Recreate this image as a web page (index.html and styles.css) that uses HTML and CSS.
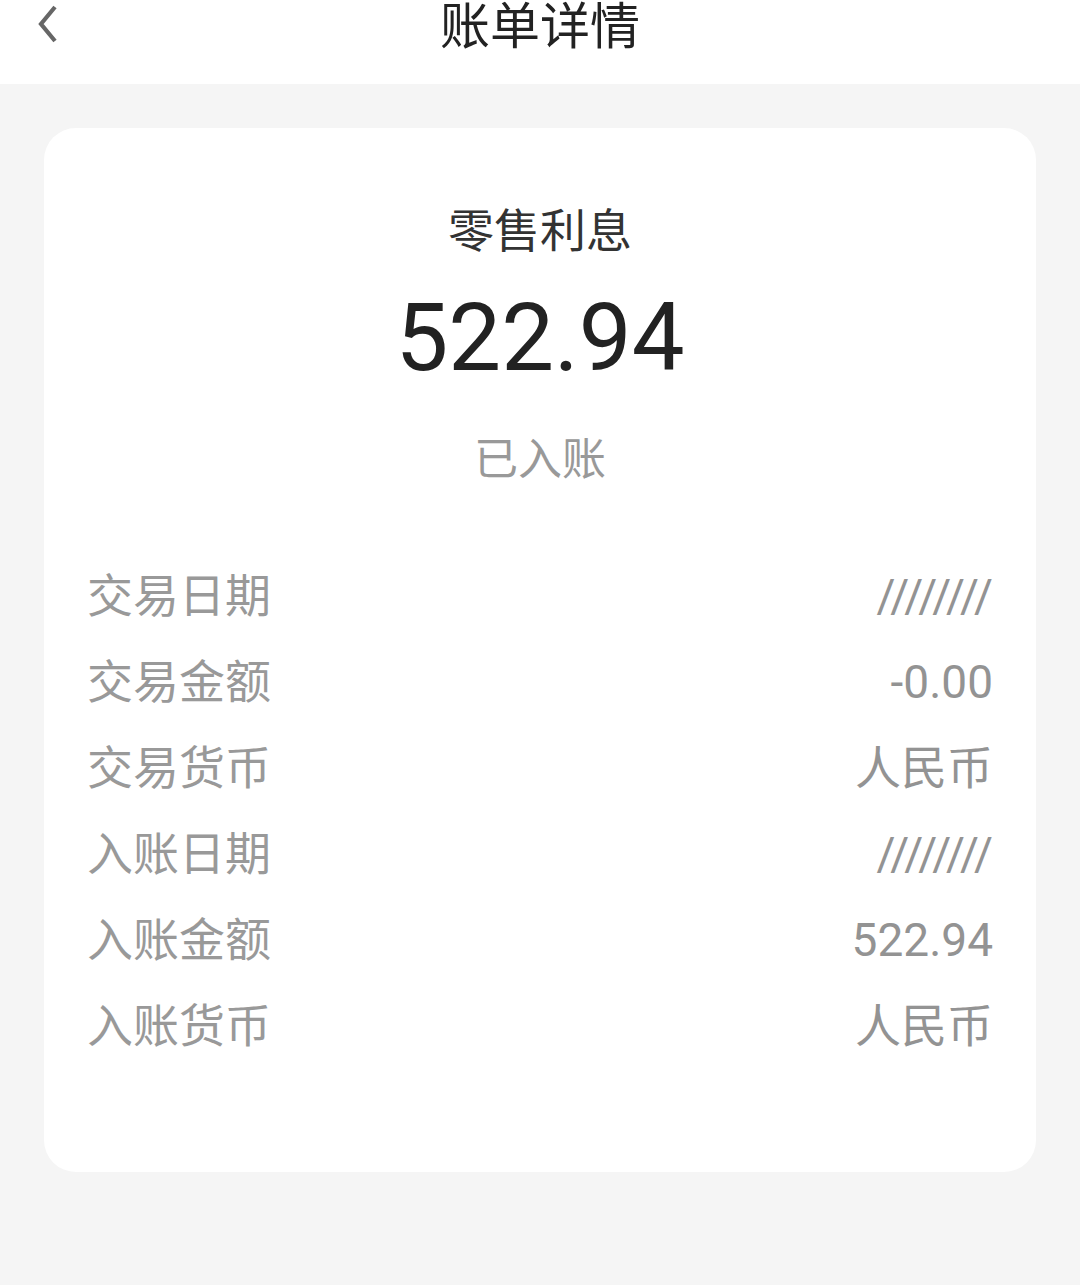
FILE: index.html
```html
<!DOCTYPE html>
<html>
<head lang="zh-CN">
    <meta charset="UTF-8">
    <title>账单详情</title>
    <link rel="stylesheet" href="styles.css">
</head>
<body>
<div class="header">
    <span class="back">
        <svg width="24" height="40" viewBox="0 0 24 40">
            <path d="M19 3 L5 20 L19 37" fill="none" stroke="#666" stroke-width="4.2"/>
        </svg>
    </span>
    <h1 class="title">账单详情</h1>
</div>
<div class="main">
    <div class="card">
        <div class="card-type">零售利息</div>
        <div class="amount">522.94</div>
        <div class="status">已入账</div>
        <ul class="rows">
            <li><span class="label">交易日期</span><span class="value">////////</span></li>
            <li><span class="label">交易金额</span><span class="value">-0.00</span></li>
            <li><span class="label">交易货币</span><span class="value">人民币</span></li>
            <li><span class="label">入账日期</span><span class="value">////////</span></li>
            <li><span class="label">入账金额</span><span class="value">522.94</span></li>
            <li><span class="label">入账货币</span><span class="value">人民币</span></li>
        </ul>
    </div>
</div>
</body>
</html>
```

FILE: styles.css
```css
*{
    margin: 0;
    padding: 0;
}
ul{
    list-style: none;
}
html, body{
    height: 100%;
}
body{
    background: #f5f5f5;
    font-family: Roboto, "Noto Sans CJK SC", sans-serif;
}
.header{
    height: 84px;
    background: #fff;
    position: relative;
}
.back{
    position: absolute;
    left: 36px;
    top: 4px;
}
.title{
    padding-top: 1px;
    font-size: 50px;
    font-weight: normal;
    line-height: 52px;
    color: #222;
    text-align: center;
}
.main{
    padding: 44px 44px 0;
}
.card{
    background: #fff;
    border-radius: 32px;
    padding: 72px 43px 103px;
    text-align: center;
}
.card-type{
    font-size: 46px;
    line-height: 62px;
    color: #333;
}
.amount{
    margin-top: 21px;
    font-size: 94px;
    line-height: 110px;
    color: #222;
}
.status{
    margin-top: 36px;
    font-size: 44px;
    line-height: 62px;
    color: #999;
}
.rows{
    margin-top: 62px;
}
.rows li{
    display: flex;
    justify-content: space-between;
    height: 86px;
    line-height: 86px;
    font-size: 46px;
    color: #999;
}
.value{
    color: #939393;
}
```
